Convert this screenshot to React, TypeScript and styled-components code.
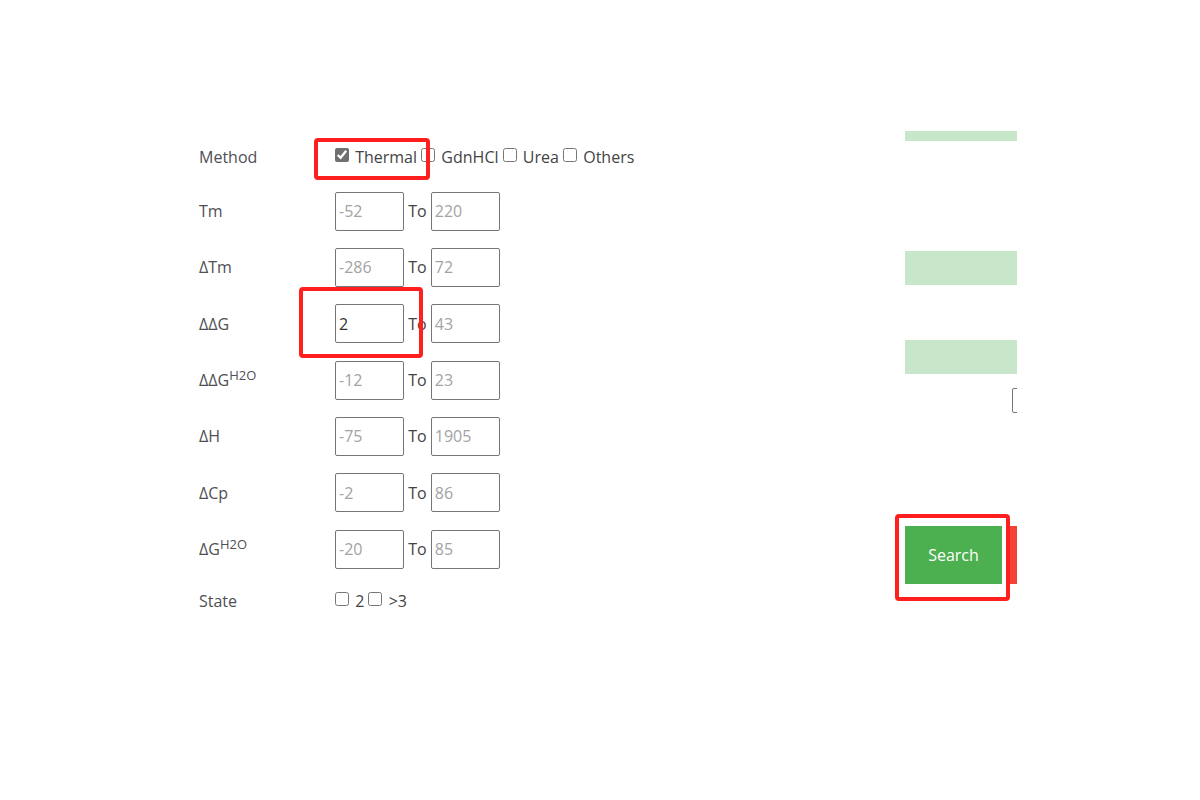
import React from "react";
import styled, { createGlobalStyle } from "styled-components";

const GlobalStyle = createGlobalStyle`
  body {
    margin: 0;
    background: #ffffff;
    font-family: "Open Sans", "Liberation Sans", sans-serif;
    font-size: 16px;
  }
`;

const Page = styled.div`
  position: relative;
  width: 1200px;
  height: 800px;
  padding-top: 131px;
  box-sizing: border-box;
  display: flex;
  overflow: hidden;
`;

const FormColumn = styled.div`
  width: 706px;
  margin-left: 199px;
  display: flex;
  flex-direction: column;
`;

const Row = styled.div<{ $h: number }>`
  display: flex;
  align-items: center;
  height: ${(p) => p.$h}px;
`;

const Label = styled.div`
  width: 136px;
  color: #4f4f55;
  line-height: 22px;

  sup {
    font-size: 13px;
    line-height: 0;
    vertical-align: 6px;
  }
`;

const Controls = styled.div`
  display: flex;
  align-items: center;
  color: #444;
  white-space: pre;
`;

const Check = styled.input.attrs({ type: "checkbox" })`
  width: 14px;
  height: 14px;
  margin: 0 2px 4px 0;
  accent-color: #707070;
`;

const RangeInput = styled.input`
  width: 69px;
  height: 39px;
  box-sizing: border-box;
  border: 1px solid #767676;
  border-radius: 2px;
  padding: 0 3px;
  font-family: "Open Sans", "Liberation Sans", sans-serif;
  font-size: 16px;
  color: #333;
  outline: none;

  &::placeholder {
    color: #a3a3a3;
  }
`;

const SidePanel = styled.div`
  width: 112px;
  overflow: hidden;
  display: flex;
  flex-direction: column;
`;

const GreenBar = styled.div<{ $h: number; $mt: number }>`
  width: 112px;
  height: ${(p) => p.$h}px;
  margin-top: ${(p) => p.$mt}px;
  background: #c8e6c9;
  flex-shrink: 0;
`;

const ClippedInput = styled.input`
  margin: 14px 0 0 107px;
  width: 120px;
  height: 25px;
  box-sizing: border-box;
  border: 1px solid #767676;
  border-radius: 2px;
  flex-shrink: 0;
`;

const ButtonRow = styled.div`
  display: flex;
  gap: 5px;
  margin-top: 113px;
  width: 300px;
`;

const Button = styled.button<{ $bg: string }>`
  width: 97px;
  height: 58px;
  border: none;
  background: ${(p) => p.$bg};
  color: #ffffff;
  font-family: "Open Sans", "Liberation Sans", sans-serif;
  font-size: 16px;
  flex-shrink: 0;
`;

const Highlight = styled.div<{ $x: number; $y: number; $w: number; $h: number }>`
  position: absolute;
  left: ${(p) => p.$x}px;
  top: ${(p) => p.$y}px;
  width: ${(p) => p.$w}px;
  height: ${(p) => p.$h}px;
  box-sizing: border-box;
  border: 4px solid #ff1f1f;
  border-radius: 4px;
  pointer-events: none;
`;

const ranges: { label: React.ReactNode; from: string; to: string; value?: string }[] = [
  { label: "Tm", from: "-52", to: "220" },
  { label: "ΔTm", from: "-286", to: "72" },
  { label: "ΔΔG", from: "-2", to: "43", value: "2" },
  { label: <>ΔΔG<sup>H2O</sup></>, from: "-12", to: "23" },
  { label: "ΔH", from: "-75", to: "1905" },
  { label: "ΔCp", from: "-2", to: "86" },
  { label: <>ΔG<sup>H2O</sup></>, from: "-20", to: "85" },
];

export default function App() {
  return (
    <Page>
      <GlobalStyle />
      <FormColumn>
        <Row $h={52}>
          <Label>Method</Label>
          <Controls>
            <Check defaultChecked />
            {" Thermal "}
            <Check />
            {" GdnHCl "}
            <Check />
            {" Urea "}
            <Check />
            {" Others"}
          </Controls>
        </Row>
        {ranges.map((r, i) => (
          <Row $h={56.33} key={i}>
            <Label>{r.label}</Label>
            <Controls>
              <RangeInput placeholder={r.from} defaultValue={r.value} />
              {" To "}
              <RangeInput placeholder={r.to} />
            </Controls>
          </Row>
        ))}
        <Row $h={48}>
          <Label>State</Label>
          <Controls>
            <Check />
            {" 2 "}
            <Check />
            {" >3"}
          </Controls>
        </Row>
      </FormColumn>

      <SidePanel>
        <GreenBar $h={10} $mt={0} />
        <GreenBar $h={34} $mt={110} />
        <GreenBar $h={34} $mt={55} />
        <ClippedInput />
        <ButtonRow>
          <Button $bg="#4caf50">Search</Button>
          <Button $bg="#f44336" aria-label="Reset" />
        </ButtonRow>
      </SidePanel>

      <Highlight $x={314} $y={138} $w={116} $h={42} />
      <Highlight $x={299} $y={287} $w={124} $h={71} />
      <Highlight $x={895} $y={514} $w={115} $h={87} />
    </Page>
  );
}
